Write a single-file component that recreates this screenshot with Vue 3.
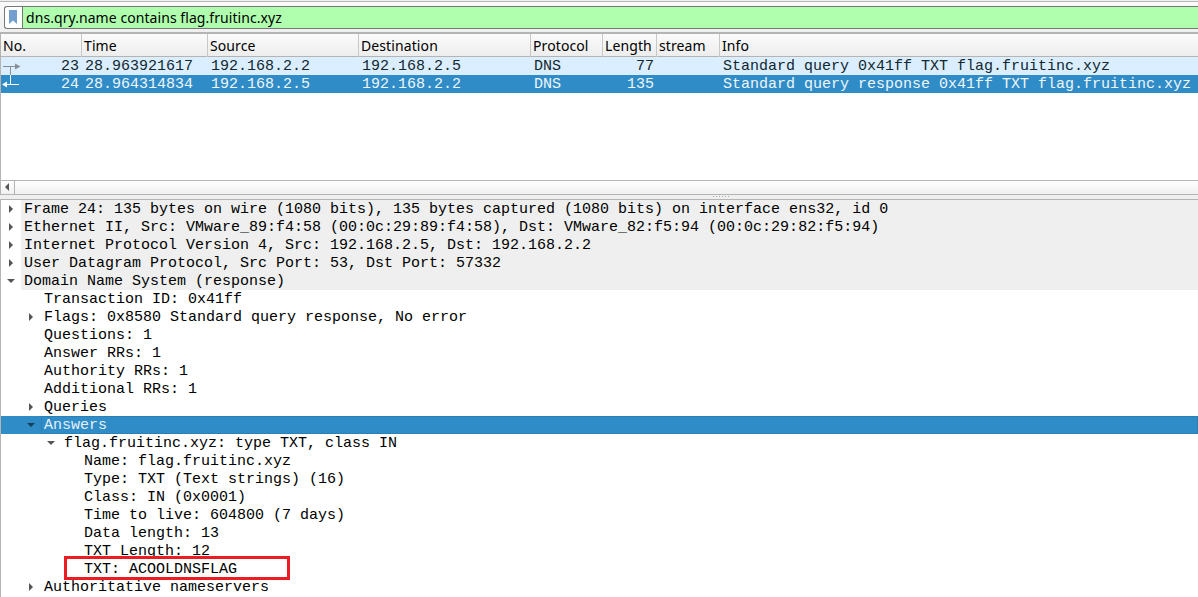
<script setup>
const columns = ['No.', 'Time', 'Source', 'Destination', 'Protocol', 'Length', 'stream', 'Info']

const packets = [
  { no: '23', time: '28.963921617', src: '192.168.2.2', dst: '192.168.2.5', proto: 'DNS', len: '77', info: 'Standard query 0x41ff TXT flag.fruitinc.xyz' },
  { no: '24', time: '28.964314834', src: '192.168.2.5', dst: '192.168.2.2', proto: 'DNS', len: '135', info: 'Standard query response 0x41ff TXT flag.fruitinc.xyz', selected: true },
]

const details = [
  { level: 0, arrow: 'closed', text: 'Frame 24: 135 bytes on wire (1080 bits), 135 bytes captured (1080 bits) on interface ens32, id 0' },
  { level: 0, arrow: 'closed', text: 'Ethernet II, Src: VMware_89:f4:58 (00:0c:29:89:f4:58), Dst: VMware_82:f5:94 (00:0c:29:82:f5:94)' },
  { level: 0, arrow: 'closed', text: 'Internet Protocol Version 4, Src: 192.168.2.5, Dst: 192.168.2.2' },
  { level: 0, arrow: 'closed', text: 'User Datagram Protocol, Src Port: 53, Dst Port: 57332' },
  { level: 0, arrow: 'open', text: 'Domain Name System (response)' },
  { level: 1, text: 'Transaction ID: 0x41ff' },
  { level: 1, arrow: 'closed', text: 'Flags: 0x8580 Standard query response, No error' },
  { level: 1, text: 'Questions: 1' },
  { level: 1, text: 'Answer RRs: 1' },
  { level: 1, text: 'Authority RRs: 1' },
  { level: 1, text: 'Additional RRs: 1' },
  { level: 1, arrow: 'closed', text: 'Queries' },
  { level: 1, arrow: 'open', text: 'Answers', selected: true },
  { level: 2, arrow: 'open', text: 'flag.fruitinc.xyz: type TXT, class IN' },
  { level: 3, text: 'Name: flag.fruitinc.xyz' },
  { level: 3, text: 'Type: TXT (Text strings) (16)' },
  { level: 3, text: 'Class: IN (0x0001)' },
  { level: 3, text: 'Time to live: 604800 (7 days)' },
  { level: 3, text: 'Data length: 13' },
  { level: 3, text: 'TXT Length: 12' },
  { level: 3, text: 'TXT: ACOOLDNSFLAG', marked: true },
  { level: 1, arrow: 'closed', text: 'Authoritative nameservers' },
]
</script>

<template>
  <div class="window">
    <div class="toolbar">
      <div class="filter">
        <div class="bookmark">
          <svg width="8" height="14" viewBox="0 0 8 14">
            <path d="M0 0H8V14L4 10.5L0 14Z" fill="#729fcf" />
          </svg>
        </div>
        <div class="expression">dns.qry.name contains flag.fruitinc.xyz</div>
      </div>
    </div>

    <div class="packets">
      <div class="grid header">
        <div v-for="c in columns" :key="c">{{ c }}</div>
      </div>
      <div class="rows">
        <div v-for="p in packets" :key="p.no" class="grid packet" :class="{ selected: p.selected }">
          <div class="right">{{ p.no }}</div>
          <div>{{ p.time }}</div>
          <div>{{ p.src }}</div>
          <div>{{ p.dst }}</div>
          <div>{{ p.proto }}</div>
          <div class="right">{{ p.len }}</div>
          <div></div>
          <div>{{ p.info }}</div>
        </div>
        <svg class="related" width="22" height="36" viewBox="0 0 22 36">
          <path d="M2 9.5H15M9.5 10V18" fill="none" stroke="#888e94" />
          <path d="M14 6.5L19.5 9.5L14 12.5Z" fill="#888e94" />
          <path d="M9.5 18V27M6 27.5H18" fill="none" stroke="#fff" />
          <path d="M6 24.5L1 27.5L6 30.5Z" fill="#fff" />
        </svg>
      </div>
      <div class="scrollbar">
        <div class="scroll-left">
          <svg width="5" height="8" viewBox="0 0 5 8"><path d="M4 0V8L0 4Z" fill="#555" /></svg>
        </div>
      </div>
    </div>

    <div class="splitter"><i v-for="n in 6" :key="n"></i></div>

    <div class="tree">
      <div v-for="d in details" :key="d.text" class="node" :class="['level-' + d.level, { selected: d.selected }]">
        <div class="branch">
          <svg v-if="d.arrow === 'closed'" width="8" height="8" viewBox="0 0 8 8"><path d="M2 0L6 4L2 8Z" fill="#555" /></svg>
          <svg v-else-if="d.arrow" width="8" height="8" viewBox="0 0 8 8"><path d="M0 2H8L4 6Z" :fill="d.selected ? '#173f5c' : '#555'" /></svg>
        </div>
        <div class="label">{{ d.text }}<span v-if="d.marked" class="mark"></span></div>
      </div>
    </div>
  </div>
</template>

<style>
body {
  overflow: hidden;
}
</style>

<style scoped>
.window {
  width: 1198px;
  height: 597px;
  overflow: hidden;
  display: flex;
  flex-direction: column;
  background: #efefef;
  color: #000;
  font-family: "Noto Sans", sans-serif;
  font-size: 14px;
  white-space: pre;
}
.window * {
  box-sizing: border-box;
}
.toolbar {
  height: 32px;
  flex: none;
  padding: 4px 0 0 4px;
  background: linear-gradient(#efefef 0 1px, #b8b8b8 1px 2px, #fbfbfb 2px, #efefef 100%);
}
.filter {
  margin-top: 2px;
  height: 23px;
  display: flex;
  border: 1px solid #777;
  border-right: 0;
  border-radius: 3px 0 0 3px;
  background: #fff;
  overflow: hidden;
}
.bookmark {
  width: 18px;
  border-right: 1px solid #777;
  padding: 3px 0 0 4px;
  line-height: 0;
}
.expression {
  flex: 1;
  background: #afffaf;
  padding-left: 3px;
  line-height: 21px;
  letter-spacing: 0.065px;
}
.packets {
  height: 163px;
  flex: none;
  display: flex;
  flex-direction: column;
  background: #fff;
  border-top: 2px solid #b6b3b3;
  border-left: 1px solid #b6b3b3;
  border-bottom: 1px solid #b6b3b3;
}
.grid {
  display: grid;
  grid-template-columns: 81px 126px 151px 172px 72px 54px 63px 1fr;
}
.header {
  height: 23px;
  background: linear-gradient(#fbfbfb, #ededed);
  border-bottom: 1px solid #b6b3b3;
  line-height: 24px;
  letter-spacing: 0.1px;
}
.header > div {
  padding-left: 2px;
  border-right: 1px solid #c8c8c8;
}
.header > div:last-child {
  border-right: 0;
}
.rows {
  position: relative;
  flex: 1;
}
.packet {
  height: 18px;
  line-height: 20px;
  background: #daeeff;
  color: #12272e;
  font-family: "Liberation Mono", monospace;
  font-size: 15px;
}
.packet > div {
  padding-left: 3px;
}
.packet > .right {
  padding: 0 3px 0 0;
  text-align: right;
}
.packet.selected {
  background: #308cc6;
  color: #eef6fc;
}
.related {
  position: absolute;
  left: 0;
  top: 0;
}
.scrollbar {
  height: 14px;
  border-top: 1px solid #b6b3b3;
  background: linear-gradient(#fff, #f0f0f0);
}
.scroll-left {
  width: 14px;
  height: 13px;
  border-right: 1px solid #b6b3b3;
  padding: 2px 0 0 4px;
  line-height: 0;
}
.splitter {
  height: 4px;
  flex: none;
  display: flex;
  gap: 2px;
  padding: 1px 0 0 713px;
}
.splitter i {
  width: 1px;
  height: 1px;
  background: #aaa;
}
.tree {
  flex: 1;
  min-height: 0;
  overflow: hidden;
  border-top: 1px solid #b6b3b3;
  border-left: 1px solid #b6b3b3;
  background: #fff;
  font-family: "Liberation Mono", monospace;
  font-size: 15px;
}
.node {
  display: flex;
  height: 18px;
  line-height: 20px;
}
.branch {
  width: 20px;
  padding: 5px 0 0 6px;
  line-height: 0;
}
.label {
  position: relative;
  flex: 1;
  height: 18px;
  padding-left: 3px;
}
.level-0 .label {
  background: #efefef;
}
.level-1 {
  padding-left: 20px;
}
.level-2 {
  padding-left: 40px;
}
.level-3 {
  padding-left: 60px;
}
.node.selected {
  background: #308cc6;
  color: #e3f0fa;
}
.node.selected .label {
  box-shadow: inset 0 0 0 1px #2a7fb5;
}
.mark {
  position: absolute;
  left: -17px;
  top: -4px;
  width: 226px;
  height: 24px;
  border: 3px solid #ed1c24;
}
</style>
